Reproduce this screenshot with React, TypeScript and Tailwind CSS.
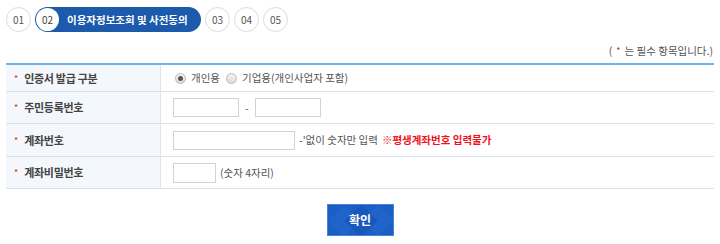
import { FC, ReactNode } from "react";

const font = { fontFamily: '"Noto Sans CJK KR", "Noto Sans", sans-serif' };

const Step: FC<{ n: string }> = ({ n }) => (
  <div className="w-[25px] h-[25px] rounded-full border border-[#dcdcdc] bg-white flex items-center justify-center text-[10px] text-[#555]">
    {n}
  </div>
);

const Row: FC<{ label: string; h: string; children: ReactNode }> = ({ label, h, children }) => (
  <div className={`flex border-b border-[#d6e1ec] ${h}`}>
    <div className="w-[155px] shrink-0 bg-[#f4f7fb] border-r border-[#dde4ec] flex items-center pl-[8px]">
      <span className="text-[#e21b1b] text-[9px] mr-[6px] leading-none">*</span>
      <span className="text-[11px] font-bold text-[#444] tracking-[-0.3px]">{label}</span>
    </div>
    <div className="flex-1 flex items-center pl-[12px] text-[10.5px] text-[#555]">{children}</div>
  </div>
);

const Radio: FC<{ checked?: boolean }> = ({ checked }) => (
  <span className="w-[11px] h-[11px] rounded-full border border-[#b9b9b9] bg-gradient-to-b from-[#f3f3f3] to-[#dcdcdc] flex items-center justify-center">
    {checked && <span className="w-[5px] h-[5px] rounded-full bg-[#555]" />}
  </span>
);

const Box: FC<{ w: string; h?: string }> = ({ w, h = "h-[19px]" }) => (
  <div className={`${w} ${h} border border-[#d2d2d2] bg-white`} />
);

export default function App() {
  return (
    <div className="w-[720px] h-[244px] bg-white relative overflow-hidden" style={font}>
      <div className="flex items-center gap-[4px] pl-[6px] pt-[7px]">
        <Step n="01" />
        <div className="h-[25px] w-[166px] rounded-full bg-[#1c5aab] flex items-center pl-[1px]">
          <div className="w-[23px] h-[23px] rounded-full bg-white flex items-center justify-center text-[10px] text-[#444]">
            02
          </div>
          <span className="ml-[8px] text-[10.5px] font-bold text-white">이용자정보조회 및 사전동의</span>
        </div>
        <Step n="03" />
        <Step n="04" />
        <Step n="05" />
      </div>

      <div className="flex justify-end pr-[7px] mt-[12px] text-[10.5px] text-[#555] h-[14px] items-center">
        <span>(</span>
        <span className="text-[#e21b1b] text-[9px] mx-[4px]">*</span>
        <span>는 필수 항목입니다.)</span>
      </div>

      <div className="mx-[6px] mt-[5px] border-t-2 border-[#6fb3e8]">
        <Row label="인증서 발급 구분" h="h-[27px]">
          <div className="flex items-center ml-[2px]">
            <Radio checked />
            <span className="ml-[5px]">개인용</span>
            <span className="ml-[6px]">
              <Radio />
            </span>
            <span className="ml-[5px]">기업용(개인사업자 포함)</span>
          </div>
        </Row>
        <Row label="주민등록번호" h="h-[32px]">
          <Box w="w-[66px]" />
          <span className="mx-[6px]">-</span>
          <Box w="w-[66px]" />
        </Row>
        <Row label="계좌번호" h="h-[33px]">
          <Box w="w-[122px]" />
          <span className="ml-[4px]">-'없이 숫자만 입력</span>
          <span className="ml-[4px] text-[#f0141e] font-bold">※평생계좌번호 입력불가</span>
        </Row>
        <Row label="계좌비밀번호" h="h-[32px]">
          <Box w="w-[43px]" h="h-[20px]" />
          <span className="ml-[4px]">(숫자 4자리)</span>
        </Row>
      </div>

      <div className="flex justify-center mt-[15px]">
        <button className="relative w-[67px] h-[32px] bg-[#1b5ec4] border border-[#4a82d6] overflow-hidden text-white font-bold text-[12px]">
          <svg className="absolute inset-0" width="67" height="32" viewBox="0 0 67 32">
            <path d="M0 16 L16 0 L32 16 L16 32 Z M34 16 L50 0 L66 16 L50 32 Z" fill="#2164c9" />
            <path d="M16 16 L33 0 L50 16 L33 32 Z" fill="#1857bb" />
          </svg>
          <span className="relative">확인</span>
        </button>
      </div>
    </div>
  );
}
